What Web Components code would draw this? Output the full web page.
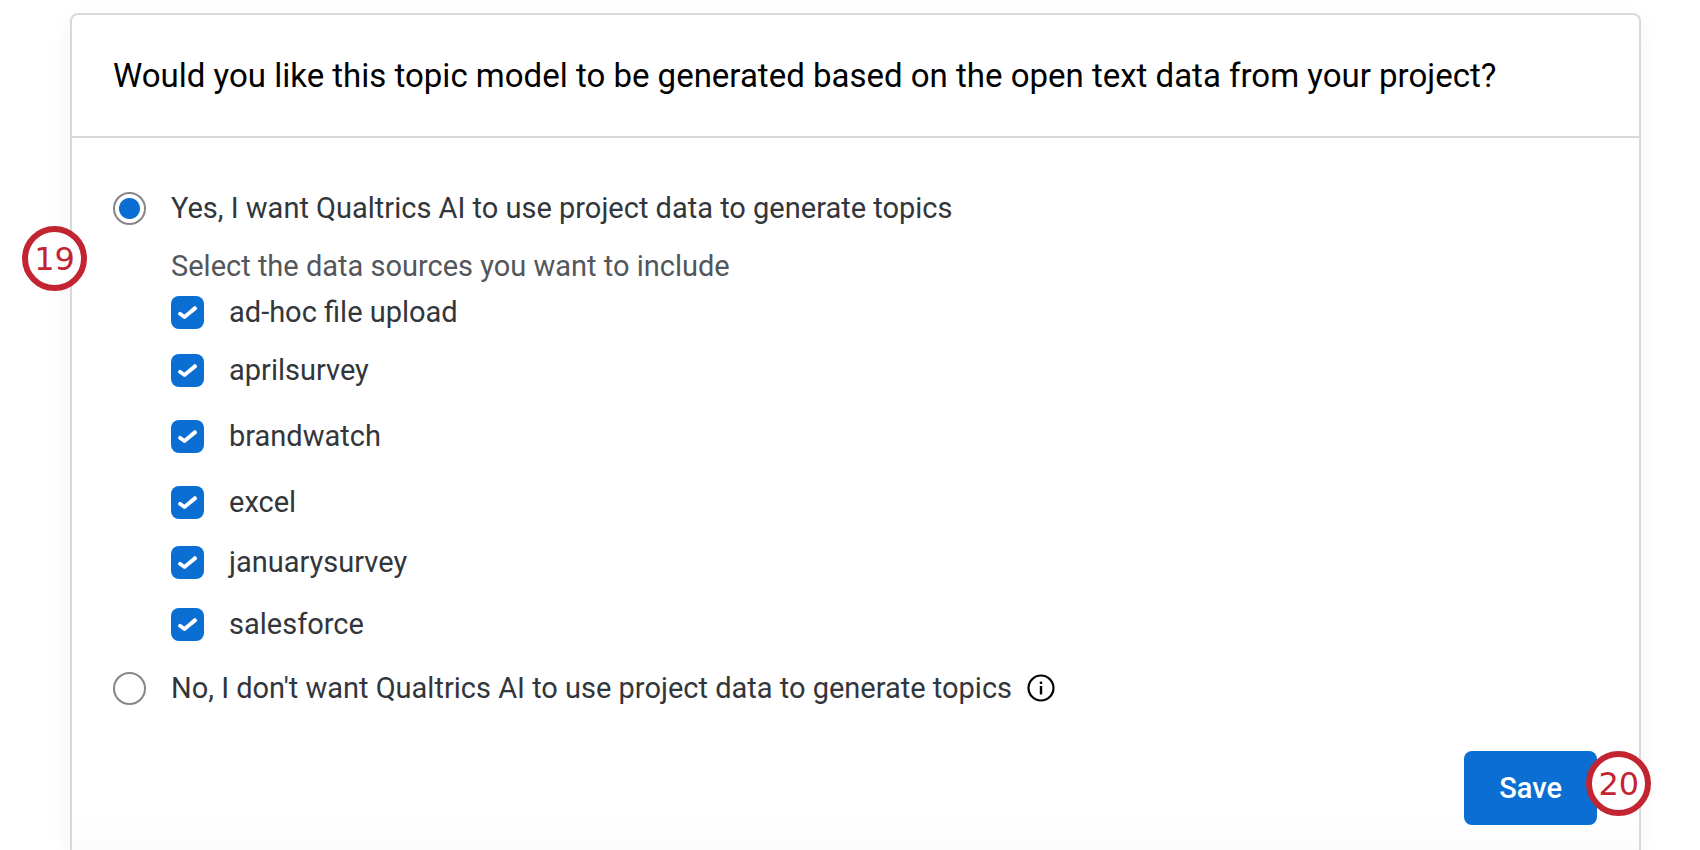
<!DOCTYPE html>
<html lang="en">
<head>
<meta charset="utf-8">
<meta name="viewport" content="width=device-width, initial-scale=1">
<title>Topic model</title>
<style>
  body {
    margin: 0;
    min-height: 100vh;
    display: flex;
    flex-direction: column;
    background: #fff;
    color: #32363b;
    font: 29px/40px Roboto, "Liberation Sans", sans-serif;
  }
  dialog-card { flex: 1; }
</style>
</head>
<body>
<dialog-card>
  <h1 slot="title">Would you like this topic model to be generated based on the open text data from your project?</h1>
  <topic-source-form></topic-source-form>
</dialog-card>

<template id="dialog-card">
  <style>
    :host {
      display: flex;
      flex-direction: column;
      box-sizing: border-box;
      margin: 13px 59px 0 70px;
      border: 2px solid #d9d9db;
      border-bottom: 0;
      border-radius: 8px 8px 0 0;
      background: linear-gradient(to top, #fcfcfc, #fff 40px);
      box-shadow: 0 8px 24px rgba(0, 0, 0, .05);
    }
    header { padding: 40px 41px; border-bottom: 2px solid #d9d9db; }
    ::slotted(h1) { margin: 0; color: #000; font-size: 33px; line-height: 41px; font-weight: 400; }
  </style>
  <header><slot name="title"></slot></header>
  <slot></slot>
</template>

<template id="topic-source-form">
  <style>
    :host { display: block; }
    form { padding: 50px 42px 25px 41px; }
    .choice { display: flex; align-items: center; gap: 25px; }
    .yes { position: relative; }
    .yes callout-badge { left: -91px; top: 38px; }
    input {
      appearance: none;
      flex: none;
      box-sizing: border-box;
      width: 33px;
      height: 33px;
      margin: 0;
      border: 2px solid #85868a;
      border-radius: 50%;
      background: #fff;
    }
    input:checked { background: radial-gradient(circle, #0b6ed3 10px, #fff 11px); }
    fieldset { margin: 0; padding: 0 0 0 58px; border: 0; }
    legend { padding: 18px 0 10px; color: #53565a; }
    .list { display: grid; grid-template-rows: 58px 66px 66px 60px 62px 60px; align-items: start; }
    .info { display: flex; margin: 0 0 0 -10px; padding: 0; border: 0; background: none; color: #000; }
    .actions { display: flex; justify-content: flex-end; padding-top: 43px; }
    .save { position: relative; }
    .save callout-badge { left: 122px; top: 0; }
    .submit {
      display: block;
      padding: 17px 35px;
      border: 0;
      border-radius: 8px;
      background: #0b6ed3;
      color: #fff;
      font: inherit;
      font-weight: 500;
    }
  </style>
  <form>
    <div class="choice yes">
      <input type="radio" name="use-data" id="yes" checked>
      <label for="yes">Yes, I want Qualtrics AI to use project data to generate topics</label>
      <callout-badge>19</callout-badge>
    </div>
    <fieldset>
      <legend>Select the data sources you want to include</legend>
      <div class="list">
        <source-check>ad-hoc file upload</source-check>
        <source-check>aprilsurvey</source-check>
        <source-check>brandwatch</source-check>
        <source-check>excel</source-check>
        <source-check>januarysurvey</source-check>
        <source-check>salesforce</source-check>
      </div>
    </fieldset>
    <div class="choice">
      <input type="radio" name="use-data" id="no">
      <label for="no">No, I don't want Qualtrics AI to use project data to generate topics</label>
      <button class="info" type="button" aria-label="More information">
        <svg width="28" height="28" viewBox="0 0 28 28" aria-hidden="true">
          <circle cx="14" cy="14" r="12.5" fill="none" stroke="currentColor" stroke-width="2.2"/>
          <circle cx="14" cy="8.8" r="1.4" fill="currentColor"/>
          <path d="M14 12v8.5" stroke="currentColor" stroke-width="2.4"/>
        </svg>
      </button>
    </div>
    <div class="actions">
      <div class="save">
        <button class="submit" type="button">Save</button>
        <callout-badge>20</callout-badge>
      </div>
    </div>
  </form>
</template>

<template id="source-check">
  <style>
    :host { display: block; }
    label { display: flex; align-items: center; gap: 25px; height: 33px; line-height: 33px; }
    .box { display: grid; flex: none; }
    .box > * { grid-area: 1 / 1; }
    input {
      appearance: none;
      width: 33px;
      height: 33px;
      margin: 0;
      border-radius: 8px;
      background: #0b6ed3;
    }
    input:not(:checked) { background: #fff; box-shadow: inset 0 0 0 2px #85868a; }
    input:not(:checked) + svg { display: none; }
    svg { pointer-events: none; }
  </style>
  <label>
    <span class="box">
      <input type="checkbox" checked>
      <svg width="33" height="33" viewBox="0 0 33 33" aria-hidden="true">
        <path d="M9 17.8l4.5 3.2L24 12.3" fill="none" stroke="#fff" stroke-width="3.8" stroke-linecap="round" stroke-linejoin="round"/>
        <path d="M20 15.6l5-4.2" fill="none" stroke="#fff" stroke-width="3.8"/>
      </svg>
    </span>
    <slot></slot>
  </label>
</template>

<template id="callout-badge">
  <style>
    :host {
      position: absolute;
      box-sizing: border-box;
      width: 65px;
      height: 65px;
      display: grid;
      place-items: center;
      border: 6px solid #c22432;
      border-radius: 50%;
      background: #fff;
      color: #c22432;
      font: 32px/40px "DejaVu Sans", sans-serif;
    }
  </style>
  <slot></slot>
</template>

<script>
  for (const name of ['dialog-card', 'topic-source-form', 'source-check', 'callout-badge']) {
    const template = document.getElementById(name);
    customElements.define(name, class extends HTMLElement {
      constructor() {
        super();
        this.attachShadow({ mode: 'open' }).append(template.content.cloneNode(true));
      }
    });
  }
</script>
</body>
</html>
